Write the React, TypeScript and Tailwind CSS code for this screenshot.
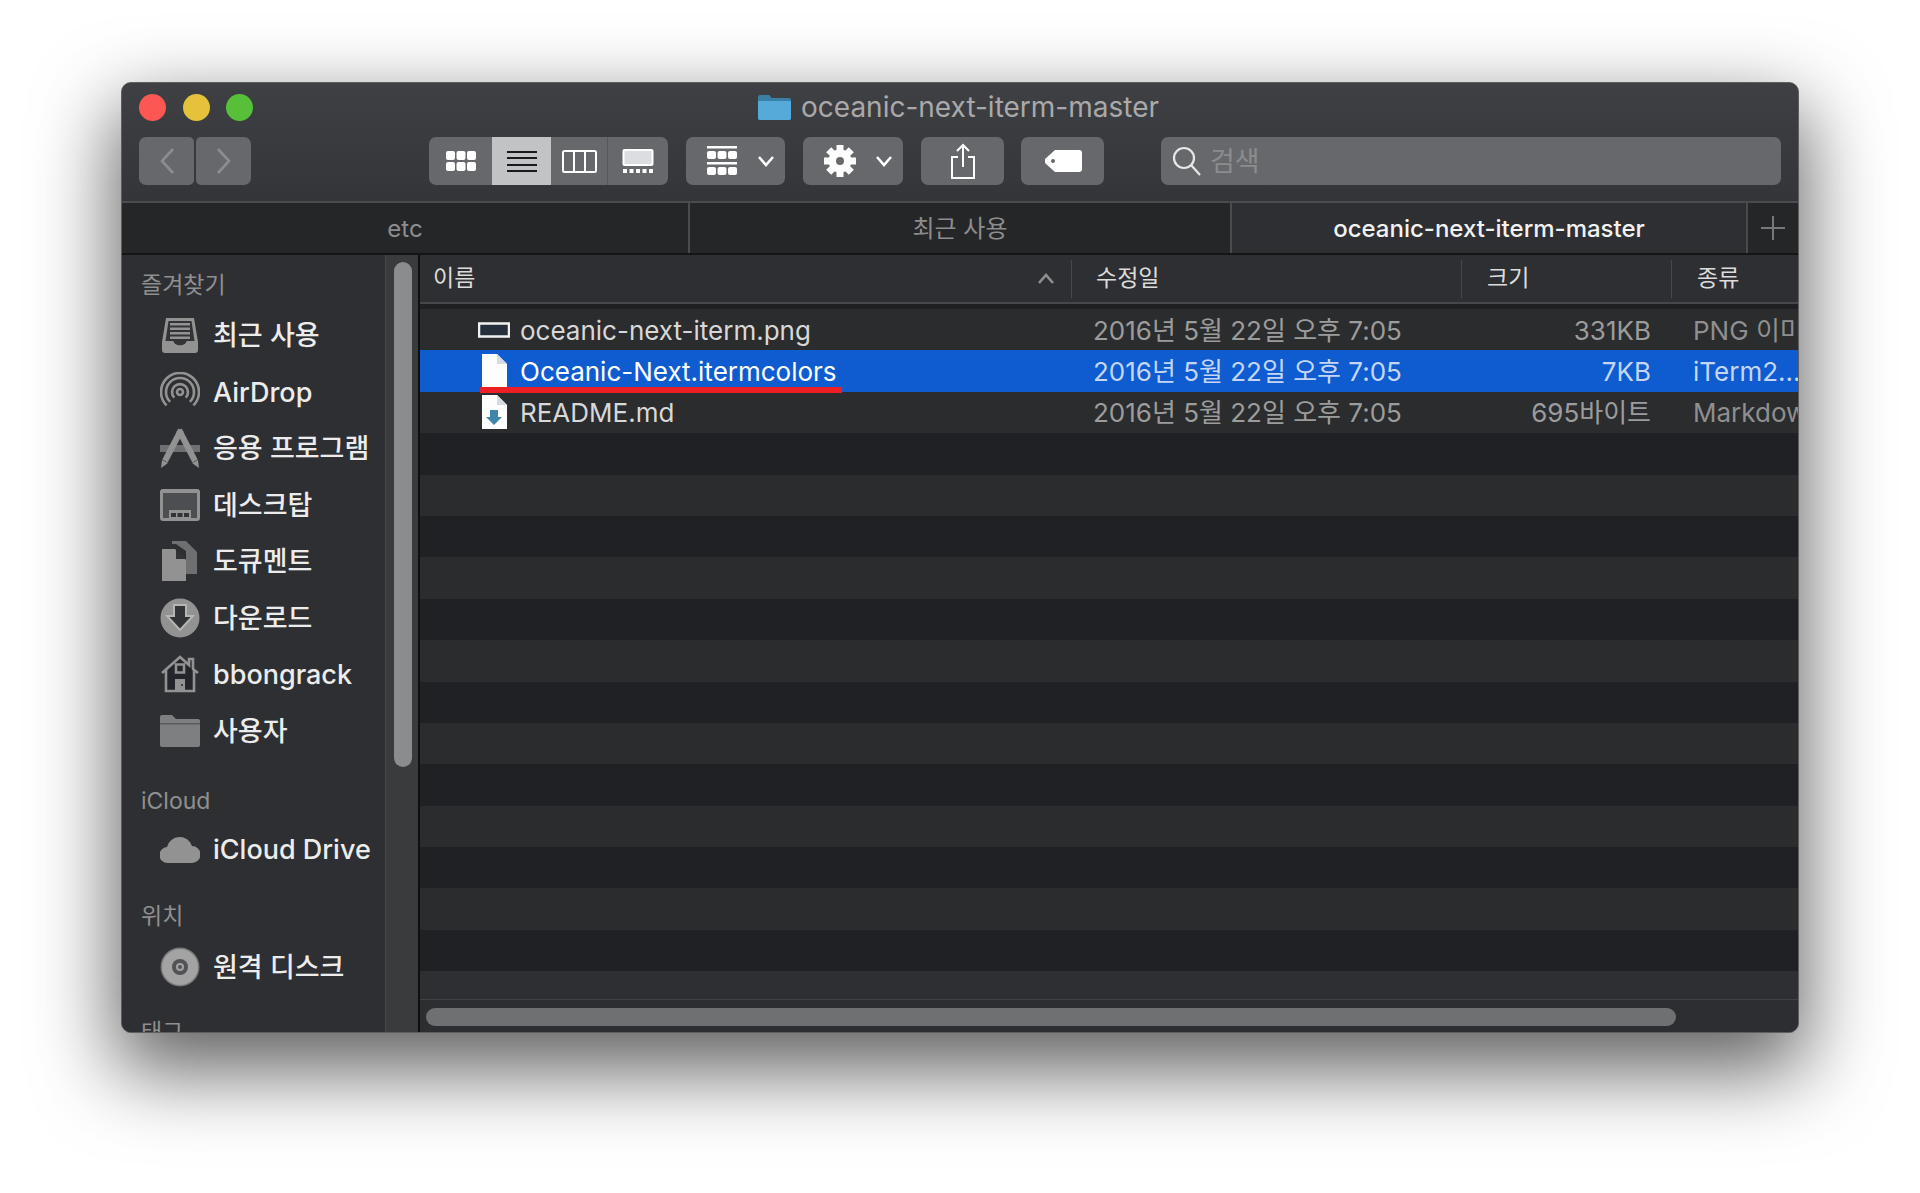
const font = { fontFamily: 'Inter, "Noto Sans CJK KR", sans-serif' };

function Chevron({ up = false }: { up?: boolean }) {
  return (
    <svg width="18" height="12" viewBox="0 0 18 12" fill="none" stroke="currentColor" strokeWidth="2.6" className={up ? 'rotate-180' : ''}>
      <path d="M2 2l7 8 7-8" />
    </svg>
  );
}

function Dots({ x = 0, y = 0, w = 9, h = 9, gap = 10.5 }: { x?: number; y?: number; w?: number; h?: number; gap?: number }) {
  return (
    <>
      {[0, 1, 2].map((i) => (
        <rect key={i} x={x + i * gap} y={y} width={w} height={h} rx="2" />
      ))}
    </>
  );
}

function Gear() {
  return (
    <svg width="32" height="32" viewBox="0 0 32 32" fill="#fff">
      {[0, 45, 90, 135, 180, 225, 270, 315].map((a) => (
        <rect key={a} x="12.500" y="0" width="7" height="8" transform={`rotate(${a} 16 16)`} />
      ))}
      <path fillRule="evenodd" d="M16 4.500a11.500 11.500 0 1 1 0 23 11.500 11.500 0 0 1 0-23zM16 12a4 4 0 1 0 0 8 4 4 0 0 0 0-8z" />
    </svg>
  );
}

const sidebarIcons = {
  recents: (
    <svg width="40" height="40" viewBox="0 0 40 40" fill="#929292">
      <path d="M6 3h28l4 24v8a3 3 0 0 1-3 3H5a3 3 0 0 1-3-3v-8L6 3z" />
      <path d="M8.500 6h23l3 20h-8a6 4 0 0 1-13 0h-8l3-20z" fill="#323336" />
      <path d="M10 8h20v2.500H10zM10 12.500h20V15H10zM10 17h20v2.500H10zM10 21.500h20V24H10z" />
    </svg>
  ),
  airdrop: (
    <svg width="40" height="40" viewBox="0 0 40 40" fill="none" stroke="#929292" strokeWidth="2.6">
      <circle cx="20" cy="20" r="3" />
      <path d="M14.300 25.700a8 8 0 1 1 11.400 0M10.100 29.900a14 14 0 1 1 19.800 0M6.600 33.400a19 19 0 1 1 26.800 0" />
    </svg>
  ),
  apps: (
    <svg width="40" height="40" viewBox="0 0 40 40" fill="none">
      <path d="M0 17h40v7H0z" fill="#6f7072" />
      <path d="M21 2L5 33" stroke="#929292" strokeWidth="6" />
      <path d="M19 2l16 31" stroke="#929292" strokeWidth="6" />
      <path d="M2 32l6 3-7 5zM38 32l-6 3 7 5z" fill="#929292" />
    </svg>
  ),
  desktop: (
    <svg width="40" height="34" viewBox="0 0 40 34" fill="#929292">
      <rect width="40" height="32" y="1" rx="3" />
      <rect x="3" y="5" width="34" height="25" fill="#4d4e51" />
      <path d="M9 22h22v8H9z" />
      <path d="M11 25h5v4h-5zM17.500 25h5v4h-5zM24 25h5v4h-5z" fill="#323336" />
    </svg>
  ),
  documents: (
    <svg width="38" height="40" viewBox="0 0 38 40" fill="#929292">
      <path d="M12 0h14l11 11v22H26V10l-10-7h-4z" fill="#6e6f71" />
      <path d="M2 8h13l11 11v21H2z" />
      <path d="M16 8l10 10H16z" fill="#323336" />
    </svg>
  ),
  downloads: (
    <svg width="40" height="40" viewBox="0 0 40 40">
      <circle cx="20" cy="20" r="19.500" fill="#929292" />
      <path d="M14 7h12v11h7L20 32 7 18h7z" fill="#323336" stroke="#b5b5b5" strokeWidth="2" />
    </svg>
  ),
  home: (
    <svg width="40" height="40" viewBox="0 0 40 40">
      <path d="M6 16L20 4l14 12v21H6z" fill="#23252b" />
      <path d="M2 19L20 3l9 8V5h4v10l5 4M6 16v21h28V16M16 10.500h8v8h-8z" fill="none" stroke="#929292" strokeWidth="2.600" />
      <path d="M15 25h10v12H15z" fill="#929292" />
      <circle cx="22" cy="31" r="1" fill="#23252b" />
    </svg>
  ),
  folder: (
    <svg width="40" height="34" viewBox="0 0 40 34">
      <path d="M0 3a2 2 0 0 1 2-2h10l4 4h22a2 2 0 0 1 2 2v24a2 2 0 0 1-2 2H2a2 2 0 0 1-2-2z" fill="#7e7f81" />
      <path d="M0 9h40v1.500H0z" fill="#5a5b5d" />
    </svg>
  ),
  cloud: (
    <svg width="40" height="30" viewBox="0 0 40 30" fill="#929292">
      <path d="M8 29a8 8 0 0 1-1-16 13 13 0 0 1 25-1 8.500 8.500 0 0 1 0 17z" />
    </svg>
  ),
  disc: (
    <svg width="40" height="40" viewBox="0 0 40 40">
      <circle cx="20" cy="20" r="19.500" fill="#777" />
      <circle cx="20" cy="20" r="18" fill="#a3a3a3" />
      <circle cx="20" cy="20" r="8" fill="#515255" />
      <circle cx="20" cy="20" r="4" fill="#a3a3a3" />
      <circle cx="20" cy="20" r="2" fill="#515255" />
    </svg>
  ),
};

type SidebarIcon = keyof typeof sidebarIcons;

function SideHeading({ label, top }: { label: string; top: string }) {
  return <div className={`${top} pl-[19px] text-[23px] leading-[40px] text-[#8f8f8f] whitespace-nowrap`}>{label}</div>;
}

function SideItem({ icon, label }: { icon: SidebarIcon; label: string }) {
  return (
    <div className="h-[56.500px] flex items-center pl-[38px] text-[27px] font-medium text-[#ececec] whitespace-nowrap">
      <div className="w-[53px] flex-none flex">{sidebarIcons[icon]}</div>
      <span className="pt-[2px]">{label}</span>
    </div>
  );
}

const favourites: { icon: SidebarIcon; label: string }[] = [
  { icon: 'recents', label: '최근 사용' },
  { icon: 'airdrop', label: 'AirDrop' },
  { icon: 'apps', label: '응용 프로그램' },
  { icon: 'desktop', label: '데스크탑' },
  { icon: 'documents', label: '도큐멘트' },
  { icon: 'downloads', label: '다운로드' },
  { icon: 'home', label: 'bbongrack' },
  { icon: 'folder', label: '사용자' },
];

function PngIcon() {
  return (
    <svg width="32" height="16" viewBox="0 0 32 16">
      <rect x="1" y="1.500" width="30" height="13" fill="#26303c" stroke="#f2f2f2" strokeWidth="2.500" />
    </svg>
  );
}

function DocIcon({ arrow = false }: { arrow?: boolean }) {
  return (
    <svg width="26" height="34" viewBox="0 0 26 34">
      <path d="M1 0h15l10 10v24H1z" fill="#fdfdfd" />
      <path d="M16 0l10 10H16z" fill="#d6dbe3" />
      {arrow && <path d="M9 15h8v7h4l-8 8-8-8h4z" fill="#3f86ac" />}
    </svg>
  );
}

const files = [
  { name: 'oceanic-next-iterm.png', size: '331KB', kind: 'PNG 이미지', icon: <PngIcon /> },
  { name: 'Oceanic-Next.itermcolors', size: '7KB', kind: 'iTerm2...', icon: <DocIcon />, selected: true },
  { name: 'README.md', size: '695바이트', kind: 'Markdown', icon: <DocIcon arrow /> },
];

const stripes = Array.from({ length: 13 }, (_, i) => i);

function ToolButton({ className, children }: { className: string; children: React.ReactNode }) {
  return <div className={`h-[48px] rounded-[7px] bg-[#67686b] flex items-center justify-center flex-none ${className}`}>{children}</div>;
}

export default function App() {
  return (
    <div className="min-h-[1193px] bg-white pt-[82px] pl-[121px]" style={font}>
      <div className="w-[1678px] h-[951px] rounded-[10px] overflow-hidden border border-[#5d5e60] flex flex-col shadow-[0_32px_80px_6px_rgba(0,0,0,0.62)] bg-[#2e2f32]">
        {/* title bar + toolbar */}
        <div className="h-[120px] flex-none bg-gradient-to-b from-[#3f4044] to-[#343539] border-b-2 border-[#4a4b4e]">
          <div className="h-[48px] mb-[6px] flex items-center pl-[17px]">
            <div className="flex gap-[16.500px]">
              <div className="w-[27px] h-[27px] rounded-full bg-[#fc5753]" />
              <div className="w-[27px] h-[27px] rounded-full bg-[#e6c13c]" />
              <div className="w-[27px] h-[27px] rounded-full bg-[#57c038]" />
            </div>
            <div className="ml-[505px] flex items-center gap-[10px] text-[28px] text-[#a9a9ab] whitespace-nowrap">
              <svg width="33" height="26" viewBox="0 0 33 26">
                <path d="M0 3a2 2 0 0 1 2-2h9l3 3h17a2 2 0 0 1 2 2v18a2 2 0 0 1-2 2H2a2 2 0 0 1-2-2z" fill="#3a7fa6" />
                <path d="M0 7h33v17a2 2 0 0 1-2 2H2a2 2 0 0 1-2-2z" fill="#56aad9" />
              </svg>
              <span>oceanic-next-iterm-master</span>
            </div>
          </div>
          <div className="flex pl-[17px] items-start">
            <ToolButton className="w-[55px] rounded-r-[5px]">
              <svg width="16" height="28" viewBox="0 0 16 28" fill="none" stroke="#8c8d8f" strokeWidth="2.600"><path d="M14 2L3 14l11 12" /></svg>
            </ToolButton>
            <ToolButton className="w-[55px] ml-[2px] rounded-l-[5px]">
              <svg width="16" height="28" viewBox="0 0 16 28" fill="none" stroke="#8c8d8f" strokeWidth="2.600"><path d="M2 2l11 12L2 26" /></svg>
            </ToolButton>

            <div className="ml-[178px] w-[239px] h-[48px] rounded-[7px] overflow-hidden bg-[#67686b] flex flex-none">
              <div className="w-[63px] flex items-center justify-center">
                <svg width="32" height="24" viewBox="0 0 32 24" fill="#fff"><Dots x={1} y={2} /><Dots x={1} y={13} /></svg>
              </div>
              <div className="w-[59px] bg-[#c2c3c5] flex items-center justify-center">
                <svg width="32" height="24" viewBox="0 0 32 24" fill="#1a1a1a"><path d="M1 2h30v2H1zM1 8h30v2H1zM1 15h30v2H1zM1 21h30v2H1z" /></svg>
              </div>
              <div className="w-[57px] flex items-center justify-center border-r border-[#56575a]">
                <svg width="35" height="24" viewBox="0 0 35 24" fill="none" stroke="#fff" strokeWidth="2"><rect x="1" y="2" width="33" height="21" rx="1.500" /><path d="M12 2v21M23 2v21" /></svg>
              </div>
              <div className="flex-1 flex items-center justify-center">
                <svg width="32" height="24" viewBox="0 0 32 24"><rect x="1.500" y="1" width="29" height="15" rx="1" fill="#dcdde0" stroke="#fff" strokeWidth="2" /><path d="M1 20h4v4H1zM7.500 20h4v4h-4zM14 20h4v4h-4zM20.500 20h4v4h-4zM27 20h4v4h-4z" fill="#fff" /></svg>
              </div>
            </div>

            <ToolButton className="ml-[18px] w-[99px] gap-[19px] text-white pl-[10px]">
              <svg width="32" height="30" viewBox="0 0 32 30" fill="#fff">
                <path d="M1 0h30v2.500H1zM1 16h30v2.500H1z" />
                <Dots x={1} y={5} h={8} /><Dots x={1} y={21} h={8} />
              </svg>
              <Chevron />
            </ToolButton>
            <ToolButton className="ml-[18px] w-[100px] gap-[19px] text-white pl-[10px]">
              <Gear />
              <Chevron />
            </ToolButton>
            <ToolButton className="ml-[18px] w-[83px]">
              <svg width="26" height="36" viewBox="0 0 26 36" fill="none" stroke="#fff" strokeWidth="2"><path d="M8 14H2v21h22V14h-6M13 24V2M7 8l6-6 6 6" /></svg>
            </ToolButton>
            <ToolButton className="ml-[17px] w-[83px]">
              <svg width="38" height="22" viewBox="0 0 38 22" fill="#fff"><path d="M11 0h24a3 3 0 0 1 3 3v16a3 3 0 0 1-3 3H11L1 13V9z" /><circle cx="9" cy="11" r="2" fill="#67686b" /></svg>
            </ToolButton>
            <ToolButton className="ml-[57px] w-[620px] justify-start pl-[11px] gap-[8px] text-[27px] text-[#8b8c8e]">
              <svg width="30" height="30" viewBox="0 0 30 30" fill="none" stroke="#e8e8e8" strokeWidth="2.200"><circle cx="12" cy="12" r="10" /><path d="M19 19l9 10" /></svg>
              <span className="pt-[2px]">검색</span>
            </ToolButton>
          </div>
        </div>

        {/* tabs */}
        <div className="h-[52px] flex-none flex bg-[#252628] border-b-2 border-[#151515] text-[24px] whitespace-nowrap">
          <div className="w-[568px] flex items-center justify-center text-[#8d8d8f] border-r-2 border-[#4a4b4d] pt-[2px]">etc</div>
          <div className="w-[542px] flex items-center justify-center text-[#8d8d8f] border-r-2 border-[#4a4b4d] pt-[2px]">최근 사용</div>
          <div className="w-[516px] bg-[#2e2f33] flex items-center justify-center text-[#f2f2f2] font-medium border-r-2 border-[#4a4b4d] pt-[2px]">oceanic-next-iterm-master</div>
          <div className="flex-1 flex items-center justify-center">
            <svg width="24" height="24" viewBox="0 0 24 24" stroke="#77787a" strokeWidth="2"><path d="M12 0v24M0 12h24" /></svg>
          </div>
        </div>

        <div className="flex-1 flex min-h-0">
          {/* sidebar */}
          <div className="w-[263px] flex-none bg-[#2e2f32] overflow-hidden">
            <SideHeading label="즐겨찾기" top="pt-[10px] pb-[2px]" />
            {favourites.map((f) => <SideItem key={f.label} icon={f.icon} label={f.label} />)}
            <SideHeading label="iCloud" top="pt-[22px]" />
            <SideItem icon="cloud" label="iCloud Drive" />
            <SideHeading label="위치" top="pt-[18px] pb-[3px]" />
            <SideItem icon="disc" label="원격 디스크" />
            <SideHeading label="태그" top="pt-[17px]" />
          </div>
          <div className="w-[33px] flex-none bg-[#3a3b3d] border-l border-[#48494b] pl-[8px] pt-[7px]">
            <div className="w-[18px] h-[505px] rounded-full bg-[#8b8c8e]" />
          </div>
          <div className="w-[2px] flex-none bg-[#0f0f0f]" />

          {/* file list */}
          <div className="flex-1 min-w-0 flex flex-col overflow-hidden">
            <div className="h-[49px] flex-none flex items-center text-[23px] text-[#dcdcdc] whitespace-nowrap border-b-2 border-[#47484a] bg-[#2e2f33]">
              <div className="w-[652px] flex-none flex items-center justify-between pl-[13px] pr-[16px] h-[38px] border-r border-[#47484a]">
                <span>이름</span>
                <span className="text-[#8f8f8f]"><Chevron up /></span>
              </div>
              <div className="w-[390px] flex-none pl-[24px] h-[38px] flex items-center border-r border-[#47484a]">수정일</div>
              <div className="w-[210px] flex-none pl-[25px] h-[38px] flex items-center border-r border-[#47484a]">크기</div>
              <div className="pl-[25px]">종류</div>
            </div>
            <div className="h-[5px] flex-none bg-[#1f2023]" />
            <div className="flex-1 min-h-0 overflow-hidden">
              {files.map((f, i) => (
                <div
                  key={f.name}
                  className={`h-[41.400px] flex items-center text-[26px] whitespace-nowrap ${f.selected ? 'bg-[#0e5cd0] text-white' : i % 2 === 0 ? 'bg-[#2b2c2e] text-[#d8d8d8]' : 'bg-[#202124]'}`}
                >
                  <div className="w-[58px] flex-none" />
                  <div className="w-[42px] flex-none flex justify-center -ml-[5px] mr-[5px]">{f.icon}</div>
                  <div className="w-[552px] flex-none pt-[1px]">{f.name}</div>
                  <div className={`w-[390px] flex-none pl-[21px] pt-[1px] ${f.selected ? 'text-[#c5d6f5]' : 'text-[#9c9c9c]'}`}>2016년 5월 22일 오후 7:05</div>
                  <div className={`w-[189px] flex-none text-right pt-[1px] ${f.selected ? 'text-[#c5d6f5]' : 'text-[#9c9c9c]'}`}>{f.size}</div>
                  <div className={`pl-[42px] pt-[1px] ${f.selected ? 'text-[#c5d6f5]' : 'text-[#8f8f8f]'}`}>{f.kind}</div>
                </div>
              ))}
              {stripes.map((i) => (
                <div key={i} className={`h-[41.400px] ${i % 2 === 0 ? 'bg-[#202124]' : 'bg-[#2b2c2e]'}`} />
              ))}
            </div>
            <div className="h-[33px] flex-none bg-[#2d2e31] border-t border-[#414244] pl-[6px] pt-[8px]">
              <div className="w-[1250px] h-[18px] rounded-full bg-[#6f7072]" />
            </div>
          </div>
        </div>
      </div>
      {/* red underline annotation over the selected row */}
      <div className="absolute left-[480px] top-[387px] w-[362px] h-[6px] bg-[#ec1f24]" />
    </div>
  );
}
